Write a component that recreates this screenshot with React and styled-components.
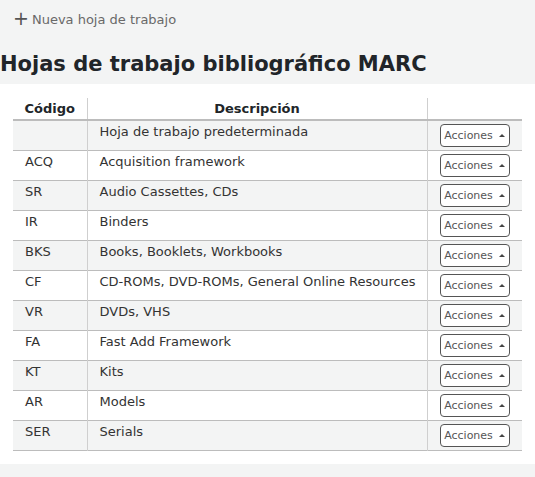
import styled, { createGlobalStyle } from "styled-components";

const GlobalStyle = createGlobalStyle`
  body {
    margin: 0;
    background: #f3f4f4;
    font-family: "DejaVu Sans", "Noto Sans", sans-serif;
    color: #212529;
  }
`;

const frameworks = [
  ["", "Hoja de trabajo predeterminada"],
  ["ACQ", "Acquisition framework"],
  ["SR", "Audio Cassettes, CDs"],
  ["IR", "Binders"],
  ["BKS", "Books, Booklets, Workbooks"],
  ["CF", "CD-ROMs, DVD-ROMs, General Online Resources"],
  ["VR", "DVDs, VHS"],
  ["FA", "Fast Add Framework"],
  ["KT", "Kits"],
  ["AR", "Models"],
  ["SER", "Serials"],
];

function App() {
  return (
    <>
      <GlobalStyle />
      <Toolbar>
        <NewLink>
          <Plus>+</Plus> Nueva hoja de trabajo
        </NewLink>
      </Toolbar>
      <Title>Hojas de trabajo bibliográfico MARC</Title>
      <Panel>
        <Table>
          <colgroup>
            <col style={{ width: 74 }} />
            <col style={{ width: 340 }} />
            <col style={{ width: 95 }} />
          </colgroup>
          <thead>
            <tr>
              <Th>Código</Th>
              <Th>Descripción</Th>
              <Th></Th>
            </tr>
          </thead>
          <tbody>
            {frameworks.map(([code, desc], i) => (
              <Row key={code || "default"} $odd={i % 2 === 0}>
                <Td>{code}</Td>
                <Td>{desc}</Td>
                <ActionCell>
                  <ActionBtn>
                    Acciones <Caret />
                  </ActionBtn>
                </ActionCell>
              </Row>
            ))}
          </tbody>
        </Table>
      </Panel>
    </>
  );
}

const Toolbar = styled.div`
  padding: 10px 13px 0;
  height: 20px;
`;

const NewLink = styled.a`
  font-size: 13px;
  color: #696969;
  display: inline-flex;
  align-items: center;
  gap: 3px;
`;

const Plus = styled.span`
  font-size: 19px;
  line-height: 1;
  color: #555;
  margin-top: -2px;
`;

const Title = styled.h1`
  margin: 0;
  padding: 21px 0 0 0;
  height: 33px;
  font-size: 21px;
  font-weight: bold;
  color: #212529;
  line-height: 26px;
`;

const Panel = styled.div`
  background: #fff;
  padding: 14px 13px 13px 13px;
`;

const Table = styled.table`
  width: 509px;
  table-layout: fixed;
  border-collapse: collapse;
  font-size: 13px;
`;

const Th = styled.th`
  height: 21px;
  padding: 0 8px;
  text-align: center;
  font-weight: bold;
  font-size: 13px;
  vertical-align: middle;
  border-bottom: 2px solid #bcbcbc;
  & + & {
    border-left: 1px solid #cfcfcf;
  }
`;

const Row = styled.tr`
  background: ${(p) => (p.$odd ? "#f3f4f4" : "#fff")};
  border-bottom: 1px solid #bcbcbc;
`;

const Td = styled.td`
  height: 30px;
  padding: 3px 4px 0 12px;
  vertical-align: top;
  color: #333;
  white-space: nowrap;
  box-sizing: border-box;
  & + & {
    border-left: 1px solid #cfcfcf;
  }
`;

const ActionCell = styled(Td)`
  padding: 2px 0 0 12px;
`;

const ActionBtn = styled.button`
  display: inline-flex;
  align-items: center;
  justify-content: center;
  gap: 6px;
  height: 23px;
  width: 70px;
  margin-top: 1px;
  padding: 0;
  font-family: "DejaVu Sans", sans-serif;
  font-size: 11px;
  color: #555;
  background: #fff;
  border: 1px solid #555;
  border-radius: 4px;
`;

const Caret = styled.span`
  width: 0;
  height: 0;
  border-left: 3px solid transparent;
  border-right: 3px solid transparent;
  border-bottom: 3px solid #444;
`;

export default App;
